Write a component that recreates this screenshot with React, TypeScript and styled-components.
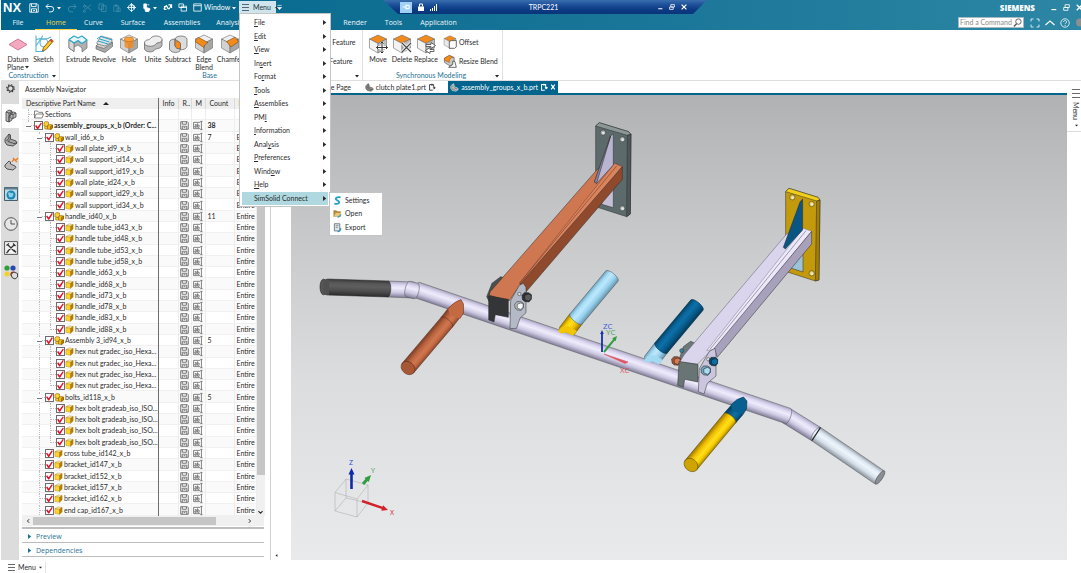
import React from 'react';
import styled, { createGlobalStyle } from 'styled-components';

const GlobalStyle = createGlobalStyle`
  * { box-sizing: border-box; }
  body { margin: 0; background: #fff; color: #2b2b2b; font: 7px/9px Lato, "Open Sans", sans-serif; }
  button, input { font: inherit; color: inherit; margin: 0; padding: 0; border: 0; background: none; }
  a { color: inherit; text-decoration: none; }
  svg { display: block; flex: none; overflow: visible; }
`;

/* ---------- shell ---------- */

const Frame = styled.div`
  height: 100vh;
  padding-left: 1px;
  display: flex;
  flex-direction: column;
  overflow: hidden;
  position: relative;
`;

const Header = styled.header`
  position: relative;
  flex: none;
  background: linear-gradient(90deg, #00648d 0%, #0f6f93 35%, #217b9c 75%, #2c86a4 100%);
  color: #fff;
`;

const TitleRow = styled.div`
  display: flex;
  align-items: center;
  height: 15px;
`;

const Brand = styled.strong`
  width: 26px;
  padding-left: 2px;
  font: bold 13px/15px "Liberation Sans", sans-serif;
`;

const QuickBar = styled.div`
  display: flex;
  align-items: center;
  gap: 6px;
  padding-left: 2px;
  width: 212px;
`;

const IconButton = styled.button<{ $dim?: boolean }>`
  display: flex;
  align-items: center;
  gap: 2px;
  opacity: ${p => (p.$dim ? 0.25 : 1)};
`;

const MenuButton = styled.button`
  display: flex;
  align-items: center;
  gap: 4px;
  height: 13px;
  width: 37px;
  padding-left: 3px;
  background: #cfe4ec;
  color: #1d3440;
`;

const Siemens = styled.span`
  margin-left: auto;
  font: 800 8px/15px "Open Sans", sans-serif;
`;

const WindowButtons = styled.div`
  display: flex;
  align-items: center;
  gap: 6px;
  width: 46px;
  padding-left: 15px;
`;

const RemoteBar = styled.div`
  position: absolute;
  left: 382px;
  top: 0;
  width: 324px;
  height: 14px;
  display: grid;
  grid-template-columns: 1fr auto 1fr;
  align-items: center;
  padding: 0 20px 0 17px;
  clip-path: polygon(0 0, 100% 0, 310px 14px, 15px 14px);
  background: linear-gradient(#3a6fae, #1c4f98 35%, #0b3a83 70%, #0a3478);
`;

const RemoteSide = styled.div<{ $end?: boolean }>`
  display: flex;
  align-items: center;
  gap: 6px;
  justify-content: ${p => (p.$end ? 'flex-end' : 'flex-start')};
`;

const Pin = styled.span`
  display: flex;
  align-items: center;
  justify-content: center;
  width: 12px;
  height: 11px;
  background: #9fd0f7;
`;

const TabRow = styled.nav`
  display: flex;
  align-items: center;
  height: 15px;
  padding-left: 2px;
`;

const RibbonTab = styled.button<{ $w: number; $active?: boolean }>`
  width: ${p => p.$w}px;
  height: 15px;
  font: 7px/15px "Open Sans", sans-serif;
  color: ${p => (p.$active ? '#f6d54b' : '#eef6fa')};
  position: relative;
  &::after {
    content: '';
    position: absolute;
    left: 2px;
    right: 2px;
    bottom: 0;
    height: 1px;
    background: ${p => (p.$active ? '#f6d54b' : 'transparent')};
  }
`;

const HiddenTabs = styled.span`
  width: 86px;
`;

const SearchBox = styled.label`
  margin-left: auto;
  display: flex;
  align-items: center;
  width: 66px;
  height: 11px;
  border: 1px solid #a6b8c0;
  background: #fff;
  input { width: 54px; padding-left: 1px; outline: 0; font-size: 7px; height: 9px; }
  input::placeholder { color: #8a8a8a; opacity: 1; }
`;

const TabTools = styled.div`
  display: flex;
  align-items: center;
  gap: 5px;
  padding-left: 6px;
  width: 57px;
  overflow: hidden;
`;

/* ---------- ribbon ---------- */

const Ribbon = styled.section`
  flex: none;
  display: flex;
  height: 51px;
  border-bottom: 1px solid #dedede;
`;

const Group = styled.div<{ $w: number; $pad: number }>`
  display: flex;
  flex-direction: column;
  justify-content: space-between;
  width: ${p => p.$w}px;
  padding: 4px 0 0 ${p => p.$pad}px;
  border-right: 1px solid #e2e2e2;
`;

const Tools = styled.div`
  display: flex;
`;

const GroupFoot = styled.div<{ $pad: number }>`
  display: grid;
  grid-template-columns: 1fr auto 1fr;
  margin-left: -${p => p.$pad}px;
  padding-right: 3px;
  align-items: center;
  justify-items: end;
  line-height: 9px;
  color: #1f7396;
  svg { color: #222; }
`;

const Tool = styled.button<{ $w: number }>`
  display: flex;
  flex-direction: column;
  align-items: center;
  width: ${p => p.$w}px;
  white-space: nowrap;
  line-height: 8px;
  span { display: flex; align-items: center; gap: 1px; margin: 1px 0 -1px; }
`;

const SideTools = styled.div<{ $left: number }>`
  display: flex;
  flex-direction: column;
  gap: 5px;
  padding-top: 1px;
  margin-left: ${p => p.$left}px;
`;

const SideTool = styled.button`
  display: flex;
  align-items: center;
  gap: 2px;
  height: 14px;
  white-space: nowrap;
`;

/* ---------- body ---------- */

const Body = styled.main`
  flex: 1;
  min-height: 0;
  display: flex;
`;

const ResourceBar = styled.nav`
  flex: none;
  width: 18px;
  background: #dcdcdc;
  display: flex;
  flex-direction: column;
`;

const ResourceTab = styled.button<{ $active?: boolean; $gap?: number; $h?: number }>`
  display: flex;
  align-items: center;
  justify-content: center;
  height: ${p => p.$h ?? 24}px;
  margin-top: ${p => p.$gap ?? 0}px;
  margin-left: 1px;
  background: ${p => (p.$active ? '#fff' : 'transparent')};
`;

const Panel = styled.aside`
  flex: none;
  width: 252px;
  padding-left: 3px;
  padding-right: 6px;
  display: flex;
  flex-direction: column;
  border-right: 1px solid #d0d0d0;
`;

const PanelTitle = styled.h2`
  margin: 0;
  padding-left: 3px;
  font: 7px/17px Lato, sans-serif;
  flex: none;
`;

const TreeArea = styled.div`
  flex: 1;
  min-height: 0;
  display: flex;
`;

const TreeTable = styled.table`
  table-layout: fixed;
  border-collapse: collapse;
  width: 234px;
  height: 100%;
  th {
    height: 11px;
    padding: 0 0 0 4px;
    text-align: left;
    font-weight: normal;
    background: #efefef;
    border-right: 1px solid #dadada;
    overflow: hidden;
    white-space: nowrap;
  }
  td { padding: 0; border-right: 1px solid #ededed; overflow: hidden; white-space: nowrap; line-height: 9px; }
  th:first-child, td:first-child { border-right: 1px solid #6e6e6e; }
  tbody tr { box-shadow: inset 0 -1px #f1f1f1; }
  tbody tr:nth-child(even) { background: #fafafa; }
  td:nth-child(n+5) { padding-left: 2px; }
`;

const Sort = styled.span`
  display: inline-block;
  margin-left: 8px;
  vertical-align: 1px;
  border: 3px solid transparent;
  border-top-width: 0;
  border-bottom: 3px solid #222;
`;

const NameCell = styled.div<{ $bold?: boolean }>`
  display: flex;
  align-items: center;
  padding-left: 1px;
  font-weight: ${p => (p.$bold ? 700 : 400)};
`;

const Slot = styled.span<{ $line?: 'none' | 'full' | 'half'; $tick?: boolean }>`
  flex: none;
  position: relative;
  width: 11px;
  height: 9px;
  display: flex;
  align-items: center;
  justify-content: center;
  &::before {
    content: '';
    position: absolute;
    left: 5px;
    top: -1px;
    bottom: ${p => (p.$line === 'half' ? 4 : -2)}px;
    border-left: ${p => (p.$line && p.$line !== 'none' ? '1px dotted #bdbdbd' : '0')};
  }
  &::after {
    content: '';
    position: absolute;
    left: 6px;
    top: 4px;
    width: 5px;
    border-top: ${p => (p.$tick ? '1px dotted #bdbdbd' : '0')};
  }
`;

const Expander = styled.button`
  position: relative;
  z-index: 1;
  width: 5px;
  height: 5px;
  padding-top: 2px;
  background: #fff;
  &::before { content: ''; display: block; height: 1px; background: #777; }
`;

const Check = styled.input`
  appearance: none;
  flex: none;
  width: 9px;
  height: 9px;
  margin: 0;
  border: 1px solid #6d6d6d;
  background: #fff;
  &:checked::before {
    content: '';
    display: block;
    width: 7px;
    height: 7px;
    background: #e0142b;
    clip-path: polygon(0 50%, 18% 38%, 38% 66%, 82% 4%, 98% 12%, 45% 98%, 32% 98%);
  }
`;

const NodeName = styled.label`
  display: flex;
  align-items: center;
  gap: 1px;
`;

const CellIcon = styled.span`
  display: flex;
  justify-content: center;
`;

const VScroll = styled.div`
  width: 9px;
  margin-top: 11px;
  background: #f0f0f0;
  display: flex;
  flex-direction: column;
  justify-content: space-between;
  align-items: center;
  &::before { content: ''; width: 8px; height: 90%; background: #c6c6c6; }
`;

const HScroll = styled.div`
  flex: none;
  display: flex;
  align-items: center;
  gap: 2px;
  height: 10px;
  padding: 0 11px 0 3px;
  background: #f0f0f0;
  i { width: 183px; height: 8px; margin-right: auto; background: #c6c6c6; }
`;

const Foldout = styled.button`
  flex: none;
  display: flex;
  align-items: center;
  gap: 4px;
  height: 14px;
  padding-top: 2px;
  padding-left: 5px;
  border-bottom: 1px solid #bcbcbc;
  color: #1f7396;
  font: 7px/11px "Open Sans", sans-serif;
`;

const Foldouts = styled.div`
  flex: none;
  display: flex;
  flex-direction: column;
  margin-top: 1px;
  padding-bottom: 3px;
  border-top: 2px solid #bdbdbd;
`;

const Gutter = styled.div`
  flex: none;
  width: 20px;
  display: flex;
  align-items: flex-end;
  padding: 0 0 3px 4px;
`;

const Work = styled.section`
  flex: 1;
  min-width: 0;
  display: flex;
  flex-direction: column;
`;

const FileTabs = styled.div`
  flex: none;
  display: flex;
  height: 14px;
  border-bottom: 2px solid #00648d;
`;

const FileTab = styled.button<{ $w: number; $active?: boolean }>`
  display: flex;
  align-items: center;
  justify-content: flex-end;
  gap: 2px;
  width: ${p => p.$w}px;
  padding-right: ${p => (p.$active ? 2 : 12)}px;
  white-space: nowrap;
  color: ${p => (p.$active ? '#fff' : '#2b2b2b')};
  background: ${p => (p.$active ? '#00648d' : '#fff')};
`;

const Viewport = styled.div`
  flex: 1;
  min-height: 0;
  background: linear-gradient(#b1b2b3, #c9cacb 32%, #dcddde 62%, #e9eaec);
  svg { width: 100%; height: 100%; }
`;

const RightRail = styled.div`
  flex: none;
  width: 14px;
  padding-top: 8px;
  overflow: hidden;
`;

const RailButton = styled.button`
  display: flex;
  flex-direction: column;
  align-items: center;
  gap: 4px;
  width: 14px;
  padding: 0 0 4px 4px;
  border-bottom: 1px solid #ddd;
  span { writing-mode: vertical-rl; line-height: 8px; }
`;

const StatusBar = styled.footer`
  flex: none;
  height: 13px;
  display: flex;
`;

const StatusMenu = styled.button`
  display: flex;
  align-items: center;
  gap: 3px;
  width: 45px;
  height: 11px;
  margin-top: 2px;
  padding-left: 7px;
  border-right: 1px solid #e4e4e4;
`;

/* ---------- menus ---------- */

const MenuList = styled.ul`
  position: absolute;
  z-index: 5;
  left: 239px;
  top: 13px;
  width: 92px;
  height: 194px;
  margin: 0;
  padding: 2px 2px 1px;
  list-style: none;
  display: grid;
  grid-auto-rows: 1fr;
  background: #fff;
  border: 1px solid #c4c4c4;
`;

const MenuItem = styled.button<{ $active?: boolean }>`
  display: flex;
  align-items: center;
  justify-content: space-between;
  width: 100%;
  height: 100%;
  padding: 0 1px 0 12px;
  background: ${p => (p.$active ? '#afd8e0' : 'transparent')};
  span { white-space: pre; }
`;

const SubMenu = styled.ul`
  position: absolute;
  z-index: 6;
  left: 329px;
  top: 192px;
  width: 54px;
  height: 44px;
  margin: 0;
  padding: 1px;
  list-style: none;
  display: grid;
  grid-auto-rows: 1fr;
  background: #fff;
  border: 1px solid #c4c4c4;
`;

const SubItem = styled.button`
  display: flex;
  align-items: center;
  gap: 3px;
  width: 100%;
  height: 100%;
  padding-left: 2px;
`;

/* ---------- small glyphs ---------- */

const Caret = ({ dir = 'down', s = 4 }: { dir?: 'down' | 'right' | 'left'; s?: number }) => (
  <svg width={s} height={s} viewBox="0 0 4 4" fill="currentColor">
    <path d={dir === 'down' ? 'M0 1h4L2 3.4z' : dir === 'right' ? 'M.8 0v4L3.4 2z' : 'M3.2 0v4L.6 2z'} />
  </svg>
);

const Bars = ({ w = 7, gap = 3 }: { w?: number; gap?: number }) => (
  <svg width={w} height={gap * 2 + 1} fill="currentColor" opacity=".7" shapeRendering="crispEdges">
    {[0, 1, 2].map(i => <rect key={i} y={i * gap} width={w} height="1" />)}
  </svg>
);

const Line = ({ d, size = 10, w = 0.9, fill = 'none' }: { d: string; size?: number; w?: number; fill?: string }) => (
  <svg width={size} height={size} viewBox="0 0 10 10" fill={fill} stroke="currentColor" strokeWidth={w}>
    <path d={d} />
  </svg>
);

const P = {
  save: 'M.8.8h7.4l1 1v7.4H.8zM2.5.8v2.8h4.6V.8M2.5 9.2V5.8h5v3.4M4 7.4h2',
  undo: 'M3.5 1 1 3.5 3.5 6M1 3.500h5a2.700 2.700 0 0 1 0 5.400H4',
  redo: 'M6.500 1 9 3.500 6.500 6M9 3.500H4a2.700 2.700 0 0 0 0 5.400h2',
  cut: 'M1 8.500 9 2M1 1.500 9 8M1.500 8.500a1 1 0 1 0 .1 0M1.500 3a1 1 0 1 0 .1 0',
  copy: 'M1 1h5v6H1zM4 3h5v6.500H4z',
  paste: 'M1 2h6v7H1zM3 1h2v2H3zM5 5h4v4.500H5z',
  target: 'M5 1.500a3.500 3.500 0 1 0 .1 0M5 0v10M0 5h10M3.500 3h4v4',
  touch: 'M2 1h3v4l4 1.500L7.500 9.500H4L3 6H2zM6 2h2',
  link: 'M1 7c2-5 3-5 4-2s3 1 4-3M6 2h3.500v3.500M1 4h3M1 7h3',
  cascade: 'M1 1h5v4H1zM3.500 3.500h6v5.500h-6zM3.500 5h6',
  window: 'M.8 1h8.400v8H.8zM.8 3h8.400',
  page: 'M6 9H2V2h5v2.500M5 1v2.500M7 4.500l2 1.500-2 1.500M9 6H6',
};

const SaveCell = () => (
  <svg width="9" height="9" viewBox="0 0 10 10" fill="#fff" stroke="#666" strokeWidth="1"><path d={P.save} /></svg>
);

const AbCell = () => (
  <svg width="10" height="9" viewBox="0 0 11 10" fill="none" stroke="#666" strokeWidth=".9">
    <path d="M8 8.500H.6v-7H8M8 .4h2.500M8 9.600h2.500M9.300.4v9.200M2 4h1.600v3H2V5.500h1.600M5 2.600V7h1.700V4.500H5" />
  </svg>
);

const Part = () => (
  <svg width="9" height="9" viewBox="0 0 10 10" stroke="#9a6a00" strokeWidth=".4" strokeLinejoin="round">
    <path d="M1 3 4.500 1 9 1.800 6.200 3.600z" fill="#ffefa0" />
    <path d="M1 3l5.200.6V9.300L1 8.300z" fill="#ffd32e" />
    <path d="M6.200 3.600 9 1.800v5L6.200 9.300z" fill="#b97f00" />
  </svg>
);

const Asm = () => (
  <svg width="10" height="9" viewBox="0 0 11 10" stroke="#7d5500" strokeWidth=".6" strokeLinejoin="round">
    <path d="M1 1.800 3 .6l3 .5v3.400L4 6 1 5.500z" fill="#ffd32e" />
    <path d="M5 5.300 7.500 3.800l3 .6v3.400L8.300 9.500 5 9z" fill="#f3bb14" />
    <path d="M8.300 9.500V5.800l2.200-1.400v3.400z" fill="#b97f00" />
    <path d="M1.800 6.500 3 6l2 .4V9L2 8.800z" fill="#ffd32e" />
  </svg>
);

const Folder = () => (
  <svg width="10" height="9" viewBox="0 0 10 9" fill="#fff" stroke="#666" strokeWidth=".8">
    <path d="M.5 8V1h3l1 1.300h4V4M.5 8 2.200 4h7.400L8 8z" />
  </svg>
);

const Swoosh = ({ c = '#555' }: { c?: string }) => (
  <svg width="9" height="9" viewBox="0 0 12 12" stroke={c} strokeWidth=".8" fill="#8b8b8b">
    <path d="M1 4 4 1l1.500 1v3L10 6.500l1 2-3 2.500-5-1-2-3z" />
    <path d="M4 1v4l-2 2M5.500 5 3.500 7l5 2L11 8.500" fill="none" />
  </svg>
);

/* ---------- ribbon artwork ---------- */

type Face = { top?: string; left?: string; right?: string };
const Cube = ({ top = '#f0f0f0', left = '#d2d2d2', right = '#a6a6a6' }: Face) => (
  <g stroke="#6b6b6b" strokeWidth=".6" strokeLinejoin="round">
    <path d="M1.500 5 10 1l8.500 4L10 9.500z" fill={top} />
    <path d="M1.500 5v9l8.500 5V9.500z" fill={left} />
    <path d="M18.500 5v9L10 19V9.500z" fill={right} />
  </g>
);

const art: Record<string, React.ReactNode> = {
  datum: <path d="M1 10.500 10 5l9 5.500-9 5.500z" fill="#f4a9c0" stroke="#c0667f" strokeWidth=".8" />,
  sketch: (
    <g fill="none" strokeWidth="1.100">
      <path d="M2 1.500v16h8M2 12 9 1.500M2 6c5-4 8 2 15-3" stroke="#5bb4cf" />
      <circle cx="10" cy="9" r="4" stroke="#5bb4cf" />
      <path d="m8.500 17 1-3.500L17 5l2.300 2-7.400 8.700z" fill="#ffc928" stroke="#6a4a10" strokeWidth=".8" />
      <path d="m15.500 6.600 2.300 2L19.300 7 17 5z" fill="#d8492f" stroke="none" />
    </g>
  ),
  extrude: (
    <g stroke="#5a5a5a" strokeWidth=".6" strokeLinejoin="round">
      <path d="M1 6v8l5 3.500V13l4-2 4 3v4l5-4V6l-5 3.500-4-3-4 2z" fill="#b0b0b0" />
      <path d="M1 6v8l5 3.500V9z" fill="#d8d8d8" />
      <path d="M1 5.500 6 2l4 2 4-2 5 4-5 3.500-4-3-4 2.500z" fill="#e8f6fb" stroke="#25a7cf" strokeWidth="1.100" />
    </g>
  ),
  revolve: (
    <g stroke="#5a5a5a" strokeWidth=".6" strokeLinejoin="round">
      <path d="M2 12 9 7l9.500 1.500v4L11 18.500 2 15z" fill="#a8a8a8" />
      <path d="M2 12 10 14.500 18.500 8.500 9 6z" fill="#d5d5d5" />
      <path d="M3 8.500 7 2l11 3v3l-7 4-8-2z" fill="#e2e2e2" />
      <path d="M4 7l10 3M7 2.500 18 6M5.500 5l10 3M3 5l4-3" stroke="#25a7cf" strokeWidth="1" />
    </g>
  ),
  hole: (
    <g>
      <Cube />
      <path d="M5.500 5.500v7c1 2.600 8 2.600 9 0v-7" fill="#f28a1c" opacity=".8" />
      <ellipse cx="10" cy="5.300" rx="4.500" ry="2.200" fill="#ffa23c" stroke="#b8620c" strokeWidth=".6" />
    </g>
  ),
  unite: (
    <g stroke="#5a5a5a" strokeWidth=".7">
      <path d="M1.500 9v6c1 3 7 4 9.500 1.500 1-1.500 2-1.500 4-2 2.500-.5 4-2 4-3.500V5.500z" fill="#bcbcbc" />
      <path d="M1.500 9c0-2 1.500-3 4-3.300C7 5.500 7.500 4 9 3c3-2 10-1 10 2.500 0 2-1.500 3-4 3.300-2 .2-2 1.500-3.500 2.500C8.500 13 1.500 12.500 1.500 9z" fill="#efefef" />
    </g>
  ),
  subtract: (
    <g stroke="#5a5a5a" strokeWidth=".7">
      <path d="M7 5c1-4 12-4 12 .5v7c-1 3-5 3.500-7 3V9z" fill="#dcdcdc" />
      <path d="M1.500 8.500C1.500 6.500 3.500 5 7 5v6.500c1 2 3 3 5 3V17c-3 2.500-10 1.500-10.500-2z" fill="#d2d2d2" />
      <path d="M7 5.500c1 2 5 1.500 5.500 4v5c-3 1-5-.5-5.500-3z" fill="#f28a1c" />
    </g>
  ),
  blend: (
    <g>
      <Cube />
      <path d="M1.500 8c0-2 1-3.500 3-4.500L14 8.500c-2 .8-4 2.500-4 5z" fill="#f28a1c" stroke="#7a4a14" strokeWidth=".6" />
    </g>
  ),
  chamfer: (
    <g>
      <Cube />
      <path d="M6.500 7.500 15 3.200l3.500 4.500L11 13z" fill="#f28a1c" stroke="#7a4a14" strokeWidth=".6" />
    </g>
  ),
  move: (
    <g>
      <Cube top="#f28a1c" left="#f3f3f3" right="#bdbdbd" />
      <g stroke="#fff" strokeWidth="3"><path d="M14 8v11M8.500 13.500h11" /></g>
      <g stroke="#333" strokeWidth="1" fill="none">
        <path d="M14 8v11M8.500 13.500h11M12.500 9.500 14 8l1.500 1.500M12.500 17.500 14 19l1.500-1.500M10 12l-1.500 1.500L10 15M18 12l1.500 1.500L18 15" />
      </g>
    </g>
  ),
  delete: (
    <g>
      <Cube top="#f28a1c" left="#f3f3f3" right="#bdbdbd" />
      <path d="m10 9 9 9M19 9l-9 9" stroke="#fff" strokeWidth="3" />
      <path d="m10 9 9 9M19 9l-9 9" stroke="#444" strokeWidth="1.200" />
    </g>
  ),
  replace: (
    <g>
      <Cube top="#f28a1c" left="#f3f3f3" right="#bdbdbd" />
      <g stroke="#444" strokeWidth=".8" fill="#fff">
        <path d="M10 10.500h5V8.500l4.500 3-4.500 3v-2h-5zM18 15.500h-4v-2l-4.500 3 4.500 3v-2h4z" />
      </g>
    </g>
  ),
  offset: (
    <g>
      <Cube top="#f28a1c" left="#e9e9e9" right="#bdbdbd" />
      <path d="M9 9.500 12 8h7v9l-2.500 2H9z" fill="#fff" stroke="#444" strokeWidth="1.100" />
    </g>
  ),
  resize: (
    <g>
      <path d="M2 6l7-4 7 3v8l-6 4-8-5z" fill="#c9c9c9" stroke="#555" strokeWidth=".9" />
      <path d="M2 6l7-4 6 3c-4 0-6 2-6 7L2 9z" fill="#f28a1c" stroke="#7a4a14" strokeWidth=".6" />
      <path d="M8 19h11l-2-8-3-1v5z" fill="#fff" stroke="#444" strokeWidth="1.100" />
    </g>
  ),
};

const Art = ({ name, size = 20 }: { name: string; size?: number }) => (
  <svg width={size} height={size} viewBox="0 0 20 20">{art[name]}</svg>
);

/* ---------- model ---------- */

type Pt = [number, number];
const Tube = ({ a, b, r, c, line = '#55555f', capEnd }: { a: Pt; b: Pt; r: number; c: string; line?: string; capEnd?: string }) => {
  const len = Math.hypot(b[0] - a[0], b[1] - a[1]);
  const ang = (Math.atan2(b[1] - a[1], b[0] - a[0]) * 180) / Math.PI;
  const k = r * 0.35;
  return (
    <g transform={`translate(${a[0]} ${a[1]}) rotate(${ang})`} stroke={line} strokeWidth=".5">
      <path d={`M0 ${-r}H${len}A${k} ${r} 0 0 1 ${len} ${r}H0A${k} ${r} 0 0 1 0 ${-r}z`} fill={`url(#${c})`} />
      {capEnd && <ellipse cx={len} cy="0" rx={r * 0.8} ry={r} fill={capEnd} />}
    </g>
  );
};

const shades: Record<string, string[]> = {
  lav: ['#a9a5c0', '#dcd7f0', '#efecfc', '#cdc8e2', '#807c96'],
  dark: ['#3a3a3a', '#585858', '#5e5e5e', '#4c4c4c', '#2c2c2c'],
  rust: ['#8b472c', '#c46a43', '#cf7750', '#b9623e', '#7c3d25'],
  sky: ['#6fa4be', '#a6dcf5', '#bce8fd', '#98d0ec', '#6795ab'],
  navy: ['#053f60', '#086499', '#0d70a8', '#075b8b', '#053a59'],
  gold: ['#a98300', '#f5cc00', '#ffdf1c', '#f0be00', '#9b7600'],
  white: ['#98a0a8', '#dbe5ef', '#eef6fc', '#d5dfe9', '#8a9299'],
};

const Hole = ({ x, y, c }: { x: number; y: number; c: string }) => (
  <g stroke="#333" strokeWidth="1.500"><circle cx={x} cy={y} r="8" fill={c} /><circle cx={x + 1} cy={y + 1} r="4" fill="#e4e6e6" stroke="none" /></g>
);

const Hex = ({ x, y, r, c, d }: { x: number; y: number; r: number; c: string; d: string }) => (
  <g transform={`translate(${x} ${y}) scale(${r / 10})`} stroke="#222" strokeWidth="1.200" strokeLinejoin="round">
    <path d="M-10-4-5-10 4-10 10-6 10 4 5 10-4 9-9 5z" fill={d} />
    <path d="M-4-4 4-7 10-4 9 4 4 8-4 5z" fill={c} />
  </g>
);

const Arrow = ({ a, b, c, w = 1.6, h = 3 }: { a: Pt; b: Pt; c: string; w?: number; h?: number }) => {
  const len = Math.hypot(b[0] - a[0], b[1] - a[1]);
  const ang = (Math.atan2(b[1] - a[1], b[0] - a[0]) * 180) / Math.PI;
  const n = len - h * 2.2;
  return (
    <path transform={`translate(${a[0]} ${a[1]}) rotate(${ang})`} fill={c}
      d={`M0 ${-w}H${n}V${-h}L${len} 0L${n} ${h}V${w}H0z`} />
  );
};

const Model = () => (
  <svg viewBox="291 95 776 465" role="img" aria-label="Assembly model">
    <defs>
      {Object.entries(shades).map(([id, s]) => (
        <linearGradient key={id} id={id} x1="0" y1="0" x2="0" y2="1">
          {s.map((c, i) => <stop key={i} offset={[0, 0.22, 0.42, 0.7, 1][i]} stopColor={c} />)}
        </linearGradient>
      ))}
    </defs>

    {/* upright handles behind the cross tube */}
    <Tube a={[566, 332]} b={[576, 319]} r={8} c="gold" line="#6b5400" />
    <Tube a={[576, 319]} b={[612, 276]} r={8} c="sky" />
    <Tube a={[651, 361]} b={[661, 348]} r={8} c="sky" />
    <Tube a={[661, 348]} b={[697, 305]} r={8} c="navy" line="#04304a" />

    {/* cross tube, left to right */}
    <Tube a={[388, 289]} b={[413, 290]} r={8} c="lav" />
    <Tube a={[787, 416]} b={[816, 434]} r={8} c="lav" />
    <Tube a={[417, 290]} b={[788, 416]} r={8} c="lav" />
    <Tube a={[408, 289]} b={[416, 291]} r={8} c="lav" />
    <Tube a={[327, 287]} b={[388, 289]} r={8} c="dark" line="#222" />
    <ellipse cx="323.500" cy="287" rx="3.500" ry="7.800" fill="#565656" stroke="#222" strokeWidth=".6" />
    <path d="M323.500 279.200H329V294.900H323.500" fill="#505050" />
    <Tube a={[816, 434]} b={[879, 477]} r={8} c="white" />
    <path d="M812 440.500 820.500 427.500" stroke="#222" strokeWidth="1.300" />
    <ellipse cx="880" cy="477.500" rx="2.500" ry="8" transform="rotate(34 880 477.500)" fill="#8a8f96" stroke="#444" strokeWidth=".5" />

    {/* saddle joints of the upright handles */}
    <path d="M558 331 561 333.500 566 332.500 573 335.500 577 331 568 326 562 327z" fill="#f2c600" />
    <path d="M643.500 360.500 647 362.500 652 361.500 659 364.500 663 360 654 355 648 356z" fill="#a3daf3" />

    {/* lower handles */}
    <Tube a={[454, 313]} b={[447, 322]} r={7.500} c="rust" line="#4a2616" />
    <path d="M448 308.500Q455 301 461 299.500L463.500 304 463.500 313 460 318.500 450 315z" fill="#c46a43" />
    <path d="M448 308.500Q455 301 461 299.500L463.500 304 463.500 313 460 318.500" fill="none" stroke="#4a2616" strokeWidth=".5" />
    <Tube a={[447, 322]} b={[408, 368]} r={7.500} c="rust" line="#4a2616" capEnd="#a85734" />
    <Tube a={[737, 410]} b={[730, 418]} r={7.500} c="navy" line="#04304a" />
    <path d="M731 405Q737 398 743.500 397L747 401 746.500 409 743 414.500 733 411z" fill="#08608f" />
    <path d="M731 405Q737 398 743.500 397L747 401 746.500 409 743 414.500" fill="none" stroke="#03283f" strokeWidth=".5" />
    <Tube a={[730, 418]} b={[691, 465]} r={7.500} c="gold" line="#4d3d00" capEnd="#cfa400" />

    {/* left arm */}
    <g transform="translate(480 110) scale(.3333)" stroke="#2b2b2b" strokeWidth="1.500" strokeLinejoin="round">
      <path d="M347 48 358 38 446 65 453 73 451 312 440 320 352 292 347 285z" fill="#5d6a6b" />
      <path d="M347 48 358 38 446 65 453 73 442 76z" fill="#8b9797" />
      <path d="M442 76 453 73 451 312 440 320z" fill="#4b5758" />
      <Hole x={369} y={68} c="#a4adad" /><Hole x={427} y={88} c="#a4adad" /><Hole x={427} y={295} c="#a4adad" />
      <path d="M365 283 400 293V230L370 250z" fill="#c3bfd6" />
      <path d="M20 560 36 520 62 500 78 505 60 560 30 580z" fill="#4a4f50" />
      <path d="M352 178 404 160 418 166 120 525 88 572 28 556 30 546z" fill="#cf7750" />
      <path d="M404 160 427 170 140 522 118 520z" fill="#d9845d" stroke="#7a3d25" />
      <path d="M427 170V208L137 547 120 522z" fill="#8f4a2d" />
      <path d="M410 168 120 518" fill="none" stroke="#5b2c19" />
      <path d="M400 72V165L350 220 343 216 392 78z" fill="#b9b4d0" />
      <path d="M392 78 350 220 343 216z" fill="#8682a0" />
      <path d="M26 558 85 568V622L46 614 42 636 26 630z" fill="#333536" />
      <path d="M92 572 118 526 130 520 138 532V608L120 625 110 655 90 656z" fill="#b4b9c6" />
      <circle cx="118" cy="552" r="5" fill="#ddd" />
      <Hex x={140} y={562} r={14} c="#5a5d5e" d="#2d3031" />
      <Hex x={117} y={588} r={13} c="#f4f6f8" d="#b9bec4" />
    </g>

    {/* right arm */}
    <g transform="translate(660 180) scale(.3333)" stroke="#2b2b2b" strokeWidth="1.500" strokeLinejoin="round">
      <path d="M377 35 387 25 474 52 480 60 477 300 466 303 382 276 377 268z" fill="#c29a0c" />
      <path d="M377 35 387 25 474 52 480 60 470 63z" fill="#f1ce1e" />
      <path d="M470 63 480 60 477 300 466 303z" fill="#a37f00" />
      <Hole x={397} y={52} c="#e6c84a" /><Hole x={455} y={72} c="#e6c84a" /><Hole x={455} y={280} c="#e6c84a" />
      <path d="M392 264 429 276V215L395 240z" fill="#9cc4d8" />
      <path d="M55 545 70 500 92 484 105 490 85 545z" fill="#6d7878" />
      <Hex x={48} y={543} r={13} c="#d97a4f" d="#a65431" />
      <circle cx="65" cy="512" r="6" fill="#2c86a4" />
      <path d="M380 162 430 145 444 151 160 505 112 553 60 545 72 525z" fill="#dad5ec" stroke="#5d5a6c" />
      <path d="M430 145 455 154 165 508 140 512z" fill="#ece8fa" stroke="#7d7a8c" />
      <path d="M455 154V192L172 532 162 506z" fill="#a7a1bc" />
      <path d="M438 152 150 508" fill="none" stroke="#4d4a5c" />
      <path d="M428 57V150L376 207 370 202 420 66z" fill="#0a5583" />
      <path d="M57 545 114 553V606L74 598 70 622 53 616z" fill="#697474" />
      <path d="M118 566 148 514 165 505 168 522V588L142 610 132 642 115 635z" fill="#cbc6dd" />
      <circle cx="145" cy="538" r="5" fill="#eee" />
      <Hex x={160} y={545} r={13} c="#0d6ea6" d="#07466c" />
      <Hex x={137} y={572} r={14} c="#a9dcf3" d="#6fa9c4" />
    </g>

    {/* work coordinate system */}
    <Arrow a={[602, 352]} b={[602, 330]} c="#1531a8" w={0.900} h={1.800} />
    <Arrow a={[604, 352]} b={[617, 336]} c="#2f9e3c" w={1} h={2.200} />
    <path d="M604 354 628 362 625 363.500z" fill="#dd5560" stroke="#dd5560" strokeWidth=".6" />
    <g fontFamily="Open Sans, sans-serif" fontSize="8">
      <text x="603" y="329" fill="#3b5bdd">ZC</text>
      <text x="606" y="335" fill="#4ba35a">YC</text>
      <text x="620" y="373" fill="#d9505b">XC</text>
    </g>

    {/* view triad */}
    <path d="M335 492.500 346 479 368 485 357 499zM335 492.500V511L357 517V499M357 517 368 503V485M335 511 346 498M346 479V498L368 503" fill="none" stroke="#a6a7a8" strokeWidth=".5" />
    <Arrow a={[351.500, 489]} b={[351.500, 468]} c="#0f2aa8" w={1.300} h={3} />
    <Arrow a={[363, 484]} b={[371, 475]} c="#2f9e3c" w={1.500} h={3} />
    <Arrow a={[362, 501]} b={[388, 510]} c="#d4202b" w={1.200} h={2.800} />
    <g fontFamily="Open Sans, sans-serif" fontSize="7">
      <text x="349" y="465" fill="#2b49d8">Z</text>
      <text x="371" y="473" fill="#3a9a48">Y</text>
      <text x="390" y="515" fill="#d4202b">X</text>
    </g>
  </svg>
);

/* ---------- data ---------- */

type Node = { name: string; lvl: number; kind: 'asm' | 'part'; count?: string; last?: boolean };

const child = (names: string[]): Node[] =>
  names.map((name, i) => ({ name, lvl: 2, kind: 'part', last: i === names.length - 1 }));

const nodes: Node[] = [
  { name: 'assembly_groups_x_b (Order: C...', lvl: 0, kind: 'asm', count: '38' },
  { name: 'wall_id6_x_b', lvl: 1, kind: 'asm', count: '7' },
  ...child(['wall plate_id9_x_b', 'wall support_id14_x_b', 'wall support_id19_x_b', 'wall plate_id24_x_b', 'wall support_id29_x_b', 'wall support_id34_x_b']),
  { name: 'handle_id40_x_b', lvl: 1, kind: 'asm', count: '11' },
  ...child(['handle tube_id43_x_b', 'handle tube_id48_x_b', 'handle tube_id53_x_b', 'handle tube_id58_x_b', 'handle_id63_x_b', 'handle_id68_x_b', 'handle_id73_x_b', 'handle_id78_x_b', 'handle_id83_x_b', 'handle_id88_x_b']),
  { name: 'Assembly 3_id94_x_b', lvl: 1, kind: 'asm', count: '5' },
  ...child(Array(4).fill('hex nut gradec_iso_Hexa...')),
  { name: 'bolts_id118_x_b', lvl: 1, kind: 'asm', count: '5' },
  ...child(Array(4).fill('hex bolt gradeab_iso_ISO...')),
  ...['cross tube_id142_x_b', 'bracket_id147_x_b', 'bracket_id152_x_b', 'bracket_id157_x_b', 'bracket_id162_x_b', 'end cap_id167_x_b'].map(
    name => ({ name, lvl: 1, kind: 'part' }) as Node),
];

const menu = ['_File', '_Edit', '_View', 'In_sert', 'Fo_rmat', '_Tools', '_Assemblies', 'PM_I', '_Information', 'Anal_ysis', '_Preferences', 'Wind_ow', '_Help', 'SimSolid Connect'];

const Mnemonic = ({ text }: { text: string }) => {
  const i = text.indexOf('_');
  return i < 0 ? <span>{text}</span> : <span>{text.slice(0, i)}<u>{text[i + 1]}</u>{text.slice(i + 2)}</span>;
};

const Row = ({ n, i }: { n: Node; i: number }) => (
  <tr>
    <td>
      <NameCell $bold={n.lvl === 0}>
        {n.lvl > 0 && <Slot />}
        {n.lvl > 1 && <Slot $line="full" />}
        <Slot $line={n.lvl === 0 || n.last ? 'half' : 'full'} $tick>
          {n.kind === 'asm' && <Expander aria-label="Collapse" />}
        </Slot>
        <Check type="checkbox" defaultChecked id={`n${i}`} />
        <NodeName htmlFor={`n${i}`}>{n.kind === 'asm' ? <Asm /> : <Part />}{n.name}</NodeName>
      </NameCell>
    </td>
    <td />
    <td><CellIcon><SaveCell /></CellIcon></td>
    <td><CellIcon><AbCell /></CellIcon></td>
    <td>{n.lvl === 0 ? <b>{n.count}</b> : n.count}</td>
    <td>{n.lvl > 0 && 'Entire'}</td>
  </tr>
);

export default function App() {
  return (
    <Frame>
      <GlobalStyle />
      <Header>
        <TitleRow>
          <Brand>NX</Brand>
          <QuickBar>
            <IconButton aria-label="Save"><Line d={P.save} /></IconButton>
            <IconButton aria-label="Undo"><Line d={P.undo} /><Caret /></IconButton>
            <IconButton aria-label="Redo" $dim><Line d={P.redo} /></IconButton>
            <IconButton aria-label="Cut" $dim><Line d={P.cut} size={9} /></IconButton>
            <IconButton aria-label="Copy" $dim><Line d={P.copy} size={9} /></IconButton>
            <IconButton aria-label="Paste" $dim><Line d={P.paste} size={8} /></IconButton>
            <IconButton aria-label="Repeat"><Line d={P.target} size={9} /></IconButton>
            <IconButton aria-label="Touch mode"><Line d={P.touch} size={9} fill="#fff" /><Caret /></IconButton>
            <IconButton aria-label="Switch"><Line d={P.link} size={9} w={1.3} /></IconButton>
            <IconButton aria-label="Cascade"><Line d={P.cascade} size={9} /></IconButton>
            <IconButton><Line d={P.window} size={9} />Window<Caret /></IconButton>
          </QuickBar>
          <MenuButton><Bars />Menu<Caret /></MenuButton>
          <IconButton aria-label="Customize"><Line d="M2 2h6M2 5h6L5 8z" size={7} fill="#fff" /></IconButton>
          <Siemens>SIEMENS</Siemens>
          <WindowButtons>
            <IconButton aria-label="Minimize"><Line d="M2 8h7" size={7} w={1.6} /></IconButton>
            <IconButton aria-label="Restore"><Line d="M3 1h6v4H3zM1 5h6v4H1z" size={7} w={1.2} /></IconButton>
            <IconButton aria-label="Close"><Line d="M1 1l8 8M9 1l-8 8" size={7} w={1.8} /></IconButton>
          </WindowButtons>
        </TitleRow>
        <TabRow>
          <RibbonTab $w={30}>File</RibbonTab>
          <RibbonTab $w={46} $active>Home</RibbonTab>
          <RibbonTab $w={29}>Curve</RibbonTab>
          <RibbonTab $w={50}>Surface</RibbonTab>
          <RibbonTab $w={48}>Assemblies</RibbonTab>
          <RibbonTab $w={47}>Analysis</RibbonTab>
          <HiddenTabs />
          <RibbonTab $w={32}>Render</RibbonTab>
          <RibbonTab $w={45}>Tools</RibbonTab>
          <RibbonTab $w={45}>Application</RibbonTab>
          <SearchBox>
            <input aria-label="Find a Command" placeholder="Find a Command" />
            <svg width="9" height="9" viewBox="0 0 10 10" fill="none" stroke="#555" strokeWidth="1"><circle cx="6" cy="4" r="3" /><path d="M4 6.500 1 9.500" strokeWidth="1.500" /></svg>
          </SearchBox>
          <TabTools>
            <IconButton aria-label="Full screen"><Line d="M1 3.500V1h2.500M6.500 1H9v2.500M9 6.500V9H6.500M3.500 9H1V6.500" w={0.8} /></IconButton>
            <IconButton aria-label="Minimize ribbon"><Line d="M.5 7 5 3l4.500 4" w={1.1} /></IconButton>
            <IconButton aria-label="Help"><Line d="M5 .8a4.200 4.200 0 1 0 .1 0M3.600 4c0-2 3-2 3 0 0 1-1.500 1-1.500 2.200M5.100 7v1" w={0.8} /></IconButton>
            <svg width="9" height="9"><circle cx="5" cy="4.500" r="4" fill="#8f8f8f" /></svg>
          </TabTools>
        </TabRow>
        <RemoteBar>
          <RemoteSide>
            <Pin><Line d="M1 5h4M5 2v6M5 3h4v4H5" size={8} w={1.2} /></Pin>
            <svg width="6" height="8" viewBox="0 0 6 8"><path d="M0 3.500h6V8H0z" fill="#fff" /><path d="M1.500 3.500V1h3v2.500" fill="none" stroke="#fff" /></svg>
            <svg width="7" height="7" fill="#fff"><path d="M0 5h1v2H0zM2 4h1v3H2zM4 2h1v5H4zM6 0h1v7H6z" /></svg>
          </RemoteSide>
          TRPC221
          <RemoteSide $end>
            <IconButton aria-label="Minimize session"><Line d="M2 8h7" size={6} w={1.8} /></IconButton>
            <IconButton aria-label="Restore session"><Line d="M3 1h6v4H3zM1 5h6v4H1z" size={6} w={1.3} /></IconButton>
            <IconButton aria-label="Close session"><Line d="M1 1l8 8M9 1l-8 8" size={6} w={2} /></IconButton>
          </RemoteSide>
        </RemoteBar>
      </Header>

      <Ribbon>
        <Group $w={59} $pad={4}>
          <Tools>
            <Tool $w={26}><Art name="datum" /><span>Datum</span><span>Plane<Caret /></span></Tool>
            <Tool $w={25}><Art name="sketch" /><span>Sketch</span></Tool>
          </Tools>
          <GroupFoot $pad={4}><i />Construction<Caret /></GroupFoot>
        </Group>
        <Group $w={303} $pad={5}>
          <Tools>
            <Tool $w={26}><Art name="extrude" /><span>Extrude</span></Tool>
            <Tool $w={26}><Art name="revolve" /><span>Revolve</span></Tool>
            <Tool $w={24}><Art name="hole" /><span>Hole</span></Tool>
            <Tool $w={24}><Art name="unite" /><span>Unite</span></Tool>
            <Tool $w={26}><Art name="subtract" /><span>Subtract</span></Tool>
            <Tool $w={26}><Art name="blend" /><span>Edge</span><span>Blend</span></Tool>
            <Tool $w={26}><Art name="chamfer" /><span>Chamfer</span></Tool>
            <SideTools $left={65}>
              <SideTool>Pattern Feature</SideTool>
              <SideTool>Mirror Feature</SideTool>
            </SideTools>
          </Tools>
          <GroupFoot $pad={5}><i />Base<Caret /></GroupFoot>
        </Group>
        <Group $w={140} $pad={3}>
          <Tools>
            <Tool $w={24}><Art name="move" /><span>Move</span></Tool>
            <Tool $w={24}><Art name="delete" /><span>Delete</span></Tool>
            <Tool $w={24}><Art name="replace" /><span>Replace</span></Tool>
            <SideTools $left={5}>
              <SideTool><Art name="offset" size={14} />Offset</SideTool>
              <SideTool><Art name="resize" size={14} />Resize Blend</SideTool>
            </SideTools>
          </Tools>
          <GroupFoot $pad={3}><i />Synchronous Modeling<Caret /></GroupFoot>
        </Group>
      </Ribbon>

      <Body>
        <ResourceBar>
          <ResourceTab aria-label="Settings" $h={15}>
            <svg width="9" height="9" viewBox="0 0 10 10" fill="none" stroke="#333"><circle cx="5" cy="5" r="3" strokeWidth="1.200" /><circle cx="5" cy="5" r="4.200" strokeWidth="1.200" strokeDasharray="1.600 1.700" /></svg>
          </ResourceTab>
          <ResourceTab aria-label="Assembly Navigator" $active $gap={8}>
            <svg width="12" height="14" viewBox="0 0 12 14" fill="#bbb" stroke="#444" strokeWidth=".8"><path d="M1 3l3-2 3 1v3L4 7v6l-3-1zM1 3l3 1v9l3-2V9M4 4l3-2M5 4.500 8.500 3 11 4v4L8 9.500 5 8.500zM5 4.500l3 1v4M8 5.500 11 4" /></svg>
          </ResourceTab>
          <ResourceTab aria-label="Constraint Navigator">
            <svg width="14" height="14" viewBox="0 0 14 14" fill="#aaa" stroke="#444" strokeWidth=".9"><path d="M1 6 5 1l1.500 1v4L12 8l1 2-4 3-6-1-2-3z" /><path d="M5 1v4L2.500 8M6.500 6 4 8.500l6 2L13 10" fill="none" /></svg>
          </ResourceTab>
          <ResourceTab aria-label="Part Navigator">
            <svg width="14" height="14" viewBox="0 0 14 14" fill="#bbb" stroke="#444" strokeWidth=".9"><path d="M1 8 5 4l1.500 1v2L11 9l1 1.500L9 13l-6-1-2-2z" /><path d="m8 5 2-3 1.500 1.500L14 1M9 1l4 4" fill="none" stroke="#ee7a1c" strokeWidth="1.300" /></svg>
          </ResourceTab>
          <ResourceTab aria-label="Web Browser" $gap={6}>
            <svg width="14" height="14" viewBox="0 0 14 14"><path d="M.5.5h13v13H.5z" fill="#bcd9e6" stroke="#44606c" /><path d="M.5.5h13v2H.5z" fill="#5d7d8b" /><circle cx="7" cy="8" r="4.500" fill="#1c86b2" /><path d="M4 6c2-2 3 1 4 0s2 1 1 3-3 1-4 1z" fill="#8ad0ea" /></svg>
          </ResourceTab>
          <ResourceTab aria-label="History" $gap={6}>
            <svg width="14" height="14" viewBox="0 0 14 14" fill="#e6e6e6" stroke="#444" strokeWidth=".9"><circle cx="7" cy="7" r="6.300" /><path d="M7 3v4h4" fill="none" /></svg>
          </ResourceTab>
          <ResourceTab aria-label="Process Studio">
            <svg width="14" height="14" viewBox="0 0 14 14" fill="#f3f3f3" stroke="#333"><path d="M.6.6h12.800v12.800H.6z" strokeWidth=".8" /><path d="m3.500 10.500 7-7M3.500 3.500l7 7M2.500 4.500 5 2.500M9 2.500l2.500 2.500M2.500 12l2-2M10 9l2 2.500" strokeWidth="1.300" /></svg>
          </ResourceTab>
          <ResourceTab aria-label="Roles">
            <svg width="14" height="14" viewBox="0 0 14 14"><circle cx="3" cy="3" r="2.600" fill="#2e9e3b" /><circle cx="9" cy="3" r="2.600" fill="#2747b5" /><circle cx="3" cy="9" r="2.600" fill="#f0d22a" /><circle cx="9" cy="9" r="2.600" fill="#c8281f" /><path d="m7 9 3-2 3.500 1.500V12L11 14l-3-1.500z" fill="#ddd" stroke="#333" strokeWidth=".9" /></svg>
          </ResourceTab>
        </ResourceBar>

        <Panel>
          <PanelTitle>Assembly Navigator</PanelTitle>
          <TreeArea>
            <TreeTable>
              <colgroup>
                <col style={{ width: 136 }} /><col style={{ width: 20 }} /><col style={{ width: 13 }} />
                <col style={{ width: 14 }} /><col style={{ width: 29 }} /><col style={{ width: 22 }} />
              </colgroup>
              <thead>
                <tr><th>Descriptive Part Name<Sort /></th><th>Info</th><th>R..</th><th>M</th><th>Count</th><th>Ref</th></tr>
              </thead>
              <tbody>
                <tr>
                  <td><NameCell><Slot $line="full" $tick /><NodeName><Folder />Sections</NodeName></NameCell></td>
                  <td /><td /><td /><td /><td />
                </tr>
                {nodes.map((n, i) => <Row key={i} n={n} i={i} />)}
              </tbody>
            </TreeTable>
            <VScroll><Line d="M2 3l3 3 3-3" size={7} w={1.5} /></VScroll>
          </TreeArea>
          <HScroll><Line d="M7 2 4 5l3 3" size={6} w={1.6} /><i /><Line d="M3 2l3 3-3 3" size={6} w={1.6} /></HScroll>
          <Foldouts>
            <Foldout><Caret dir="right" s={5} />Preview</Foldout>
            <Foldout><Caret dir="right" s={5} />Dependencies</Foldout>
          </Foldouts>
        </Panel>
        <Gutter><Caret dir="left" s={3} /></Gutter>

        <Work>
          <FileTabs>
            <FileTab $w={72}>Welcome Page</FileTab>
            <FileTab $w={85}><Swoosh />clutch plate1.prt<Line d={P.page} size={8} w={1.1} /></FileTab>
            <FileTab $w={110} $active><Swoosh c="#d8e6ec" />assembly_groups_x_b.prt<Line d={P.page} size={8} w={1.3} /><Line d="M2 1l6 8M8 1 2 9" size={6} w={2} /></FileTab>
          </FileTabs>
          <Viewport><Model /></Viewport>
        </Work>
        <RightRail>
          <RailButton><Bars w={8} gap={4} /><span>Menu</span><Caret s={3} /></RailButton>
        </RightRail>
      </Body>

      <StatusBar>
        <StatusMenu><Bars />Menu<Caret s={3} /></StatusMenu>
      </StatusBar>

      <MenuList>
        {menu.map(m => (
          <li key={m}><MenuItem $active={m === 'SimSolid Connect'}><Mnemonic text={m} /><Caret dir="right" s={5} /></MenuItem></li>
        ))}
      </MenuList>
      <SubMenu>
        <li><SubItem><svg width="9" height="9" viewBox="0 0 10 10" fill="none" stroke="#1ea3c6" strokeWidth="2"><path d="M8.500 1.500C4 .5 1 3 5 5s1 4.500-3.500 3.500" /></svg>Settings</SubItem></li>
        <li><SubItem><svg width="9" height="9" viewBox="0 0 10 10"><path d="M.5 1.500h3l1 1h4v6h-8z" fill="#b38a3c" /><path d="M1 8.500 3 4.500h6.500l-1.500 4z" fill="#e8c877" /><path d="M5 9c2 0 3-1 3.500-3" fill="none" stroke="#1ea3c6" strokeWidth="1.300" /></svg>Open</SubItem></li>
        <li><SubItem><svg width="9" height="9" viewBox="0 0 10 10"><path d="M1.500.8h6v8h-6z" fill="#dfe5ea" stroke="#5c6b75" strokeWidth=".9" /><path d="M3 3h3M3 5h2" stroke="#5c6b75" strokeWidth=".8" /><path d="M5 9.500c2 0 4-1 3.500-4" fill="none" stroke="#2c9bbd" strokeWidth="1.300" /></svg>Export</SubItem></li>
      </SubMenu>
    </Frame>
  );
}
